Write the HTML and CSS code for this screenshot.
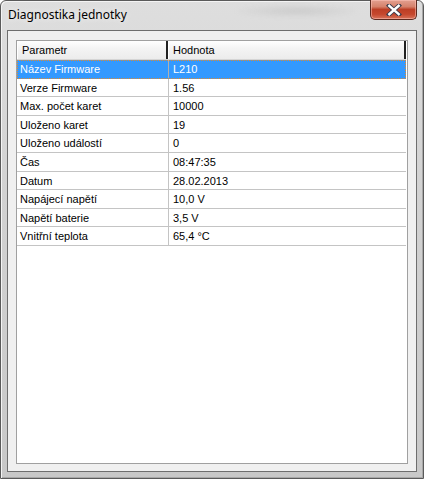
FILE: index.html
```html
<!DOCTYPE html>
<html>
<head>
<meta charset="utf-8">
<link rel="stylesheet" href="styles.css">
</head>
<body>
<div class="window">
  <div class="titlebar">
    <span class="title">Diagnostika jednotky</span>
    <div class="ghost"></div>
    <div class="close">
      <svg width="18" height="12" viewBox="0 0 18 12">
        <path d="M4 1.5 L14 10.5 M14 1.5 L4 10.5" stroke="#3a3a4a" stroke-width="4.2" stroke-linecap="square"/>
        <path d="M4.3 1.8 L13.7 10.2 M13.7 1.8 L4.3 10.2" stroke="#ffffff" stroke-width="2.4" stroke-linecap="square"/>
      </svg>
    </div>
  </div>
  <div class="client">
    <div class="list">
      <div class="header">
        <div class="hcell c1">Parametr</div>
        <div class="hcell c2">Hodnota</div>
      </div>
      <div class="row selected"><div class="cell c1">Název Firmware</div><div class="cell c2">L210</div></div>
      <div class="row"><div class="cell c1">Verze Firmware</div><div class="cell c2">1.56</div></div>
      <div class="row"><div class="cell c1">Max. počet karet</div><div class="cell c2">10000</div></div>
      <div class="row"><div class="cell c1">Uloženo karet</div><div class="cell c2">19</div></div>
      <div class="row"><div class="cell c1">Uloženo událostí</div><div class="cell c2">0</div></div>
      <div class="row"><div class="cell c1">Čas</div><div class="cell c2">08:47:35</div></div>
      <div class="row"><div class="cell c1">Datum</div><div class="cell c2">28.02.2013</div></div>
      <div class="row"><div class="cell c1">Napájecí napětí</div><div class="cell c2">10,0 V</div></div>
      <div class="row"><div class="cell c1">Napětí baterie</div><div class="cell c2">3,5 V</div></div>
      <div class="row"><div class="cell c1">Vnitřní teplota</div><div class="cell c2">65,4 °C</div></div>
    </div>
  </div>
</div>
</body>
</html>
```
FILE: styles.css
```css
html, body {
  margin: 0;
  padding: 0;
  background: #ffffff;
}
.window {
  width: 424px;
  height: 479px;
  box-sizing: border-box;
  border: 1px solid #5a5a5a;
  border-radius: 6px 6px 0 0;
  background: linear-gradient(180deg, #dedede 0%, #d2d2d2 40%, #c8c8c8 100%);
  display: flex;
  flex-direction: column;
  padding: 0 6px 6px 6px;
  box-shadow: inset 1px 1px 0 #f4f4f4, inset -1px -1px 0 #a8a8a8;
}
.titlebar {
  height: 29px;
  flex: none;
  position: relative;
  display: flex;
  align-items: flex-start;
}
.title {
  font-family: "Noto Sans", "Open Sans", sans-serif;
  font-size: 12px;
  color: #000;
  margin-left: 1px;
  margin-top: 5px;
  text-shadow: 0 0 6px rgba(255,255,255,0.9);
}
.ghost {
  position: absolute;
  left: 225px;
  top: 3px;
  width: 130px;
  height: 14px;
  background: radial-gradient(ellipse at center, rgba(150,150,150,0.25), rgba(200,200,200,0) 70%);
  filter: blur(2px);
}
.close {
  position: absolute;
  right: 0;
  top: -1px;
  width: 47px;
  height: 20px;
  box-sizing: border-box;
  border: 1px solid #5c2a20;
  border-top: none;
  border-radius: 0 0 5px 5px;
  background: linear-gradient(180deg, #e3a090 0%, #d6826c 35%, #bd3f26 50%, #c5472d 75%, #d8735a 100%);
  box-shadow: inset 0 0 0 1px rgba(255,200,190,0.5);
  display: flex;
  align-items: center;
  justify-content: center;
}
.client {
  flex: 1;
  background: #f0f0f0;
  border: 1px solid #6e6e6e;
  padding: 9px 8px 7px 8px;
  display: flex;
}
.list {
  flex: 1;
  background: #ffffff;
  border: 1px solid #a0a0a0;
  font-family: "Liberation Sans", Arial, sans-serif;
  font-size: 11px;
  color: #000;
  padding-right: 1px;
}
.header {
  display: flex;
  height: 19px;
  background: linear-gradient(180deg, #ffffff 0%, #f4f4f4 40%, #ececec 100%);
  border-bottom: 1px solid #d5d5d5;
  box-sizing: border-box;
}
.hcell {
  box-sizing: border-box;
  padding-left: 4px;
  padding-top: 3px;
  border-right: 2px solid #202020;
  border-left: 1px solid #ffffff;
}
.header .c1 { width: 151px; }
.header .c2 { flex: 1; }
.row {
  display: flex;
  height: 18.6px;
  box-sizing: border-box;
  border-bottom: 1px solid #c4c4c4;
  line-height: 18px;
}
.cell {
  box-sizing: border-box;
  padding-left: 3px;
  white-space: nowrap;
}
.row .c1 {
  width: 152px;
  border-right: 1px solid #c4c4c4;
}
.row .c2 {
  flex: 1;
  padding-left: 4px;
}
.row.selected {
  background: #3399ff;
  color: #ffffff;
  outline: 1px dotted #e08a30;
  outline-offset: -1px;
  border-bottom-color: #3399ff;
}
.row.selected .c1 {
  border-right-color: #b0b0b0;
}
```
